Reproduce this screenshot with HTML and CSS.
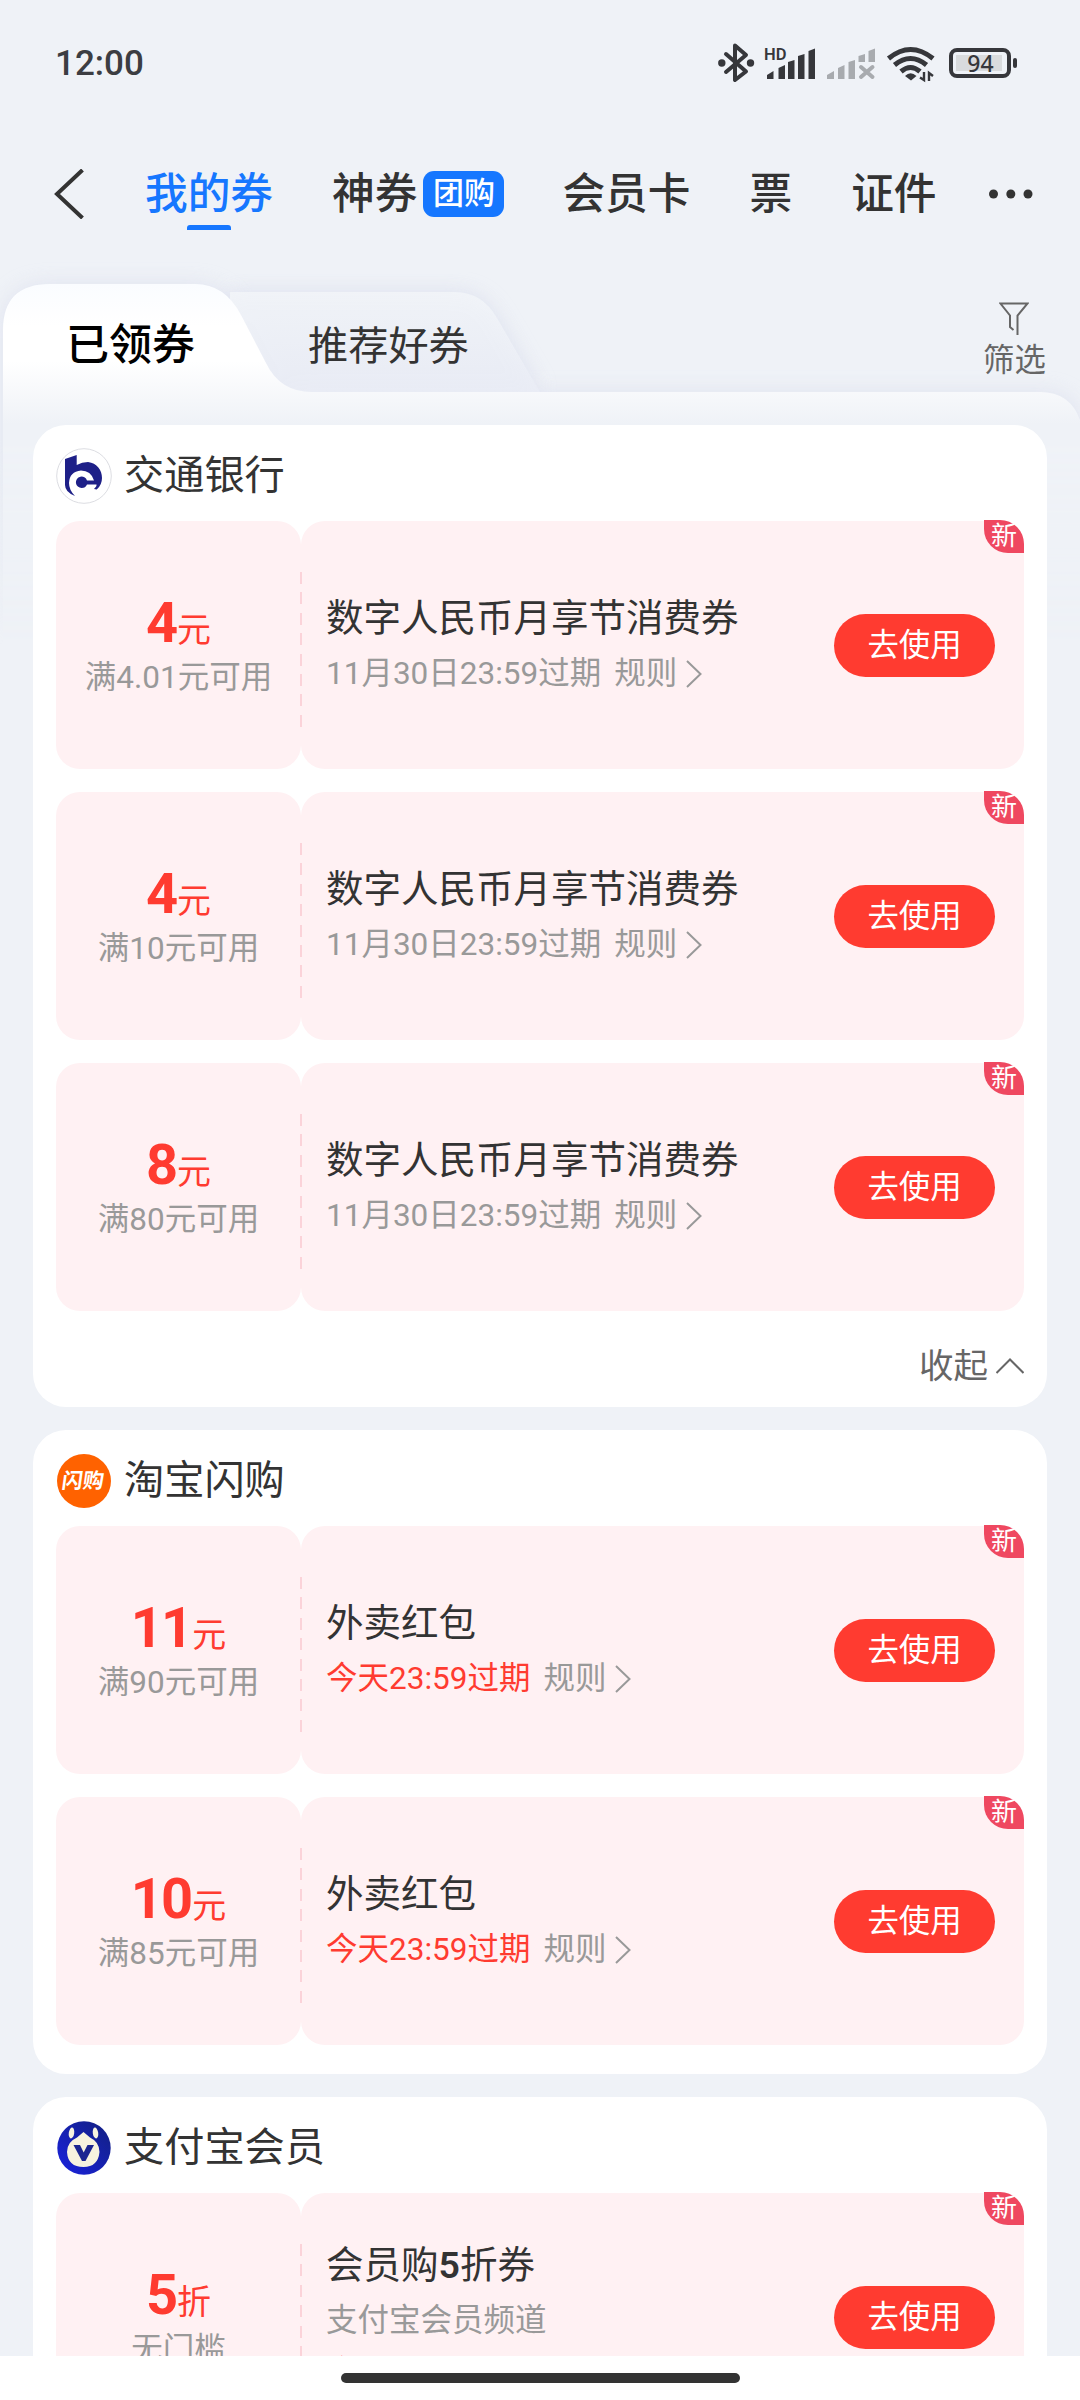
FILE: index.html
```html
<!DOCTYPE html>
<html lang="zh-CN">
<head>
<meta charset="utf-8">
<title>我的券</title>
<link rel="stylesheet" href="styles.css">
</head>
<body>
<div class="screen">
  <header class="status">
    <span class="clock">12:00</span>
    <svg class="status-icons" width="304" height="44" viewBox="716 41 304 44">
      <g fill="none" stroke="#36373b" stroke-width="4" stroke-linejoin="round" stroke-linecap="round">
        <path d="M726 54L746 71.500L735 80V45.500L746 55L726 72"/>
      </g>
      <circle cx="721.800" cy="63" r="3.700" fill="#36373b"/><circle cx="750.500" cy="63" r="3.700" fill="#36373b"/>
      <text class="hd" x="764" y="59.500">HD</text>
      <path fill="#36373b" d="M767 79V75L773.500 71V79zM778.500 79V68L785 65V79zM788 79V62L794.500 60V79zM798 79V56L804.500 54V79zM808.500 79V51L815 48.500V79z"/>
      <path fill="#a8abaf" d="M827 79V75L834 71V79zM838 79V68L844.500 65V79zM848.500 79V62L855 60V79zM858.500 62V56L865 54V62zM868.500 62V51L875 48.500V62z"/>
      <path fill="none" stroke="#a8abaf" stroke-width="4" stroke-linecap="round" d="M861 67L872.500 77M872.500 67L861 77"/>
      <g fill="none" stroke="#36373b" stroke-width="5" stroke-linecap="butt">
        <path d="M888.500 58.500Q910.500 40.500 933 58.500"/><path d="M894.500 65Q910.500 52 926.500 65"/><path d="M901 71.500Q910.500 63.500 920 71.500"/>
      </g>
      <path fill="#36373b" d="M905 76Q910.500 70.500 916.500 76L911 80.500z"/>
      <path fill="none" stroke="#36373b" stroke-width="2.400" d="M920 77.500L924 80V72M929 81V73L933 76"/>
      <rect x="951" y="50" width="58" height="26" rx="6" fill="none" stroke="#36373b" stroke-width="4"/>
      <rect x="956" y="55" width="46" height="16" fill="#d9dbdd"/>
      <rect x="1013" y="58" width="4" height="10" rx="2" fill="#36373b"/>
      <text class="bat" x="980.500" y="71.500" text-anchor="middle">94</text>
    </svg>
  </header>

  <nav class="nav">
    <svg class="back" width="32" height="50" viewBox="0 0 32 50"><path d="M28.500 1L3 25L28.500 49" fill="none" stroke="#333" stroke-width="4"/></svg>
    <span class="nav-item active">我的券</span>
    <span class="nav-item shen">神券<b class="pill">团购</b></span>
    <span class="nav-item card-tab">会员卡</span>
    <span class="nav-item ticket-tab">票</span>
    <span class="nav-item id-tab">证件</span>
    <svg class="dots" width="46" height="12" viewBox="0 0 46 12" fill="#333"><circle cx="5.500" cy="6" r="4.500"/><circle cx="22.800" cy="6" r="4.500"/><circle cx="40" cy="6" r="4.500"/></svg>
  </nav>

  <section class="tabs">
    <svg class="tabs-bg" width="1080" height="400" viewBox="0 250 1080 400">
      <defs>
        <linearGradient id="front" gradientUnits="userSpaceOnUse" x1="0" y1="284" x2="0" y2="424"><stop offset="0" stop-color="#fafcff"/><stop offset=".3" stop-color="#fff"/><stop offset=".55" stop-color="#fff"/><stop offset="1" stop-color="#eff2f7"/></linearGradient>
        <linearGradient id="back" gradientUnits="userSpaceOnUse" x1="0" y1="292" x2="0" y2="392"><stop offset="0" stop-color="#f1f4f8"/><stop offset="1" stop-color="#e9ecf5"/></linearGradient>
        <linearGradient id="fade" gradientUnits="userSpaceOnUse" x1="0" y1="440" x2="0" y2="645"><stop offset="0" stop-color="#fff"/><stop offset="1" stop-color="#000"/></linearGradient>
        <mask id="m"><rect x="0" y="250" width="1080" height="400" fill="url(#fade)"/></mask>
        <filter id="blur" x="-10%" y="-20%" width="120%" height="140%"><feGaussianBlur stdDeviation="10"/></filter>
      </defs>
      <g mask="url(#m)">
        <path d="M230 292H455Q482 292 497 318L540 392H230z" fill="#d9ddec" opacity=".8" filter="url(#blur)"/>
        <path d="M3 700V330Q3 284 50 284H195Q225 284 241 315L266 363Q280 392 312 392H1045Q1072 392 1080 420V700z" fill="#d9dcec" opacity=".65" filter="url(#blur)"/>
        <path d="M230 292H455Q482 292 497 318L540 392H230z" fill="url(#back)" opacity=".92"/>
        <path d="M3 700V330Q3 284 50 284H195Q225 284 241 315L266 363Q280 392 312 392H1040Q1070 392 1080 420V700z" fill="url(#front)"/>
      </g>
    </svg>
    <span class="tab-on">已领券</span>
    <span class="tab-off">推荐好券</span>
    <div class="filter">
      <svg width="30" height="34" viewBox="0 0 30 34"><path d="M14.500 28L11 25V13.500L1.500 1.500H28.500L18.500 13.500V33" fill="none" stroke="#666" stroke-width="2"/></svg>
      <span>筛选</span>
    </div>
  </section>

  <main class="list">
    <section class="card">
      <h2 class="brand"><svg width="56" height="56" viewBox="0 0 56 56"><circle cx="28" cy="28" r="27.300" fill="#fff" stroke="#dcdde2"/><path d="M9 11L20.700 7V17Q26 14 32 14C41 15 46 22 46 30Q46 37 40.700 41.500L38 41Q41 38 40.500 36.500H31Q29.500 40 25.700 40A5.700 5.700 0 1 1 31 32.500H38Q35 22.500 25 22.500Q13.500 23.500 13 35Q13 42 19 48Q9 44 9 37z" fill="#1e2088"/></svg>交通银行</h2>
      <div class="coupons">
        <article class="coupon"><div class="value"><p class="amount"><b>4</b>元</p><p class="cond">满4.01元可用</p></div><div class="info"><div class="desc"><h3>数字人民币月享节消费券</h3><p><span>11月30日23:59过期</span><span class="rule">规则</span><svg class="chev" width="16" height="28" viewBox="0 0 16 28"><path d="M1 1L14.500 14L1 27"/></svg></p></div><button>去使用</button><i class="new">新</i></div></article>
        <article class="coupon"><div class="value"><p class="amount"><b>4</b>元</p><p class="cond">满10元可用</p></div><div class="info"><div class="desc"><h3>数字人民币月享节消费券</h3><p><span>11月30日23:59过期</span><span class="rule">规则</span><svg class="chev" width="16" height="28" viewBox="0 0 16 28"><path d="M1 1L14.500 14L1 27"/></svg></p></div><button>去使用</button><i class="new">新</i></div></article>
        <article class="coupon"><div class="value"><p class="amount"><b>8</b>元</p><p class="cond">满80元可用</p></div><div class="info"><div class="desc"><h3>数字人民币月享节消费券</h3><p><span>11月30日23:59过期</span><span class="rule">规则</span><svg class="chev" width="16" height="28" viewBox="0 0 16 28"><path d="M1 1L14.500 14L1 27"/></svg></p></div><button>去使用</button><i class="new">新</i></div></article>
      </div>
      <div class="collapse">收起<svg width="28" height="16" viewBox="0 0 28 16"><path d="M.5 15L14 1.500L27.500 15" fill="none" stroke="#666" stroke-width="2"/></svg></div>
    </section>

    <section class="card">
      <h2 class="brand"><svg width="56" height="56" viewBox="0 0 56 56"><circle cx="28" cy="28" r="27" fill="#ff6200"/><text class="flash" x="27" y="35" text-anchor="middle" transform="skewX(-8) translate(4 0)">闪购</text></svg>淘宝闪购</h2>
      <div class="coupons">
        <article class="coupon"><div class="value"><p class="amount"><b>11</b>元</p><p class="cond">满90元可用</p></div><div class="info"><div class="desc"><h3>外卖红包</h3><p><span class="today">今天23:59过期</span><span class="rule">规则</span><svg class="chev" width="16" height="28" viewBox="0 0 16 28"><path d="M1 1L14.500 14L1 27"/></svg></p></div><button>去使用</button><i class="new">新</i></div></article>
        <article class="coupon"><div class="value"><p class="amount"><b>10</b>元</p><p class="cond">满85元可用</p></div><div class="info"><div class="desc"><h3>外卖红包</h3><p><span class="today">今天23:59过期</span><span class="rule">规则</span><svg class="chev" width="16" height="28" viewBox="0 0 16 28"><path d="M1 1L14.500 14L1 27"/></svg></p></div><button>去使用</button><i class="new">新</i></div></article>
      </div>
    </section>

    <section class="card">
      <h2 class="brand"><svg width="56" height="56" viewBox="0 0 56 56"><defs><linearGradient id="vip" x1="1" y1="0" x2="0" y2="1"><stop offset="0" stop-color="#12207f"/><stop offset="1" stop-color="#1a22e0"/></linearGradient></defs><circle cx="28" cy="28" r="26.700" fill="url(#vip)"/><path d="M27.500 12L34 17.500Q43.500 22 43.500 32Q42 47 27.500 47Q12 47 11 32Q11 22 21 17.500z" fill="#f7f3df"/><ellipse cx="15.500" cy="13" rx="2.700" ry="5.500" transform="rotate(8 15.500 13)" fill="#f7f3df"/><ellipse cx="39.500" cy="13" rx="2.700" ry="5.500" transform="rotate(-8 39.500 13)" fill="#f7f3df"/><path d="M17.500 25H24L27.700 32.500L31.500 25H38L29.500 41H26z" fill="#1b2590"/></svg>支付宝会员</h2>
      <div class="coupons">
        <article class="coupon"><div class="value"><p class="amount"><b>5</b>折</p><p class="cond">无门槛</p></div><div class="info"><div class="desc tall"><h3>会员购<b>5</b>折券</h3><p>支付宝会员频道</p><p><span class="today">今天23:59过期</span><span class="rule">规则</span></p></div><button>去使用</button><i class="new">新</i></div></article>
      </div>
    </section>
  </main>
  <footer class="home"><span></span></footer>
</div>
</body>
</html>
```
FILE: styles.css
```css
* { box-sizing: border-box; }
body, h2, h3, p { margin: 0; font-weight: 400; }
body { font-family: Roboto, "Noto Sans CJK SC", sans-serif; color: #333; background: #eff2f7; }
svg { display: block; flex: none; }
.screen { width: 1080px; height: 2400px; overflow: hidden; display: flex; flex-direction: column; position: relative; }
.status { height: 126px; flex: none; display: flex; justify-content: space-between; padding: 41px 60px 0 55px; }
.clock { font-size: 35px; line-height: 46px; font-weight: 500; color: #3c3d42; }
.hd { font: 600 16.500px Roboto, sans-serif; fill: #36373b; }
.bat { font: 500 23px "Noto Sans", sans-serif; fill: #36373b; }
.nav { height: 134px; flex: none; display: flex; align-items: center; padding: 2px 0 0 54px; font-size: 42.700px; font-weight: 500; white-space: nowrap; }
.nav-item { line-height: 60px; display: flex; align-items: center; }
.active { color: #1677ff; margin-left: 59px; position: relative; }
.active::after { content: ""; position: absolute; left: 42px; top: 61px; width: 44px; height: 5px; border-radius: 3px 3px 0 0; background: #1677ff; }
.shen, .card-tab, .ticket-tab, .id-tab { margin-left: 59px; }
.shen { margin-right: -1px; }
.pill { margin-left: 6px; width: 81px; height: 46px; border-radius: 11px; background: #1677ff; color: #fff; font-size: 31px; font-weight: 500; line-height: 46px; text-align: center; }
.dots { margin-left: 51px; }
.tabs { height: 165px; flex: none; position: relative; display: flex; padding-left: 66px; white-space: nowrap; }
.tabs-bg { position: absolute; left: 0; top: -10px; }
.tab-on, .tab-off, .filter { position: relative; }
.tab-on { width: 242px; padding-top: 55px; font-size: 43px; line-height: 60px; font-weight: 500; color: #000; }
.tab-off { width: 675px; padding-top: 57px; font-size: 40.200px; line-height: 60px; }
.filter { padding-top: 42px; color: #666; font-size: 31.400px; line-height: 40px; display: flex; flex-direction: column; align-items: center; gap: 5px; }
.list { position: relative; flex: none; height: 1931px; overflow: hidden; padding: 0 33px; display: flex; flex-direction: column; gap: 23px; }
.card { flex: none; background: #fff; border-radius: 33px; padding: 0 23px 29px; }
.brand { height: 96px; padding-top: 6px; display: flex; align-items: center; gap: 12px; font-size: 40.200px; line-height: 60px; }
.flash { font: 700 21px "Noto Sans CJK SC", sans-serif; fill: #fff; }
.coupons { display: flex; flex-direction: column; gap: 23px; }
.coupon { position: relative; height: 248px; display: flex; }
.coupon::after { content: ""; position: absolute; left: 244px; top: 51px; width: 2px; height: 155px; background: repeating-linear-gradient(#fbd3d9 0 12px, transparent 12px 20.400px); }
.value, .info { background: #fff1f3; border-radius: 24px; }
.value { width: 245px; text-align: center; padding-top: 68px; }
.amount { color: #ff3b30; font-size: 34px; height: 70px; line-height: 68px; white-space: nowrap; display: flex; justify-content: center; align-items: baseline; }
.amount b { font-size: 56px; letter-spacing: -2px; margin-right: 1px; }
.cond { margin-top: -1px; font-size: 31.500px; line-height: 40px; color: #999; }
.info { position: relative; width: 723px; padding: 0 29px 0 25px; display: flex; align-items: center; justify-content: space-between; }
.desc { padding-top: 1px; }
.desc h3 { font-size: 37.500px; line-height: 56px; color: #333; }
.desc h3 b { font-weight: 600; }
.desc p { display: flex; align-items: center; font-size: 31.500px; line-height: 56px; color: #999; }
.desc.tall { padding-top: 4px; }
.tall p + p { margin-top: -4px; }
.rule { margin-left: 13px; }
.desc .today { color: #ff3b30; }
.chev { margin-left: 9px; fill: none; stroke: #999; stroke-width: 2; }
button { width: 161px; height: 63px; padding: 0; border: 0; border-radius: 32px; background: #ff3b30; color: #fff; font: 400 31.400px/61px Roboto, "Noto Sans CJK SC", sans-serif; }
.new { position: absolute; right: 0; top: -1px; width: 40px; height: 33px; border-radius: 0 24px 0 24px; background: #ef4860; color: #fff; font-size: 26px; line-height: 33px; font-style: normal; text-align: center; }
.collapse { height: 67px; padding-top: 42px; display: flex; justify-content: flex-end; align-items: center; gap: 8px; font-size: 34.500px; line-height: 30px; color: #666; }
.home { position: relative; height: 44px; flex: none; background: #fff; display: flex; justify-content: center; padding-top: 17px; }
.home span { width: 399px; height: 10px; border-radius: 5px; background: #333; }
```
